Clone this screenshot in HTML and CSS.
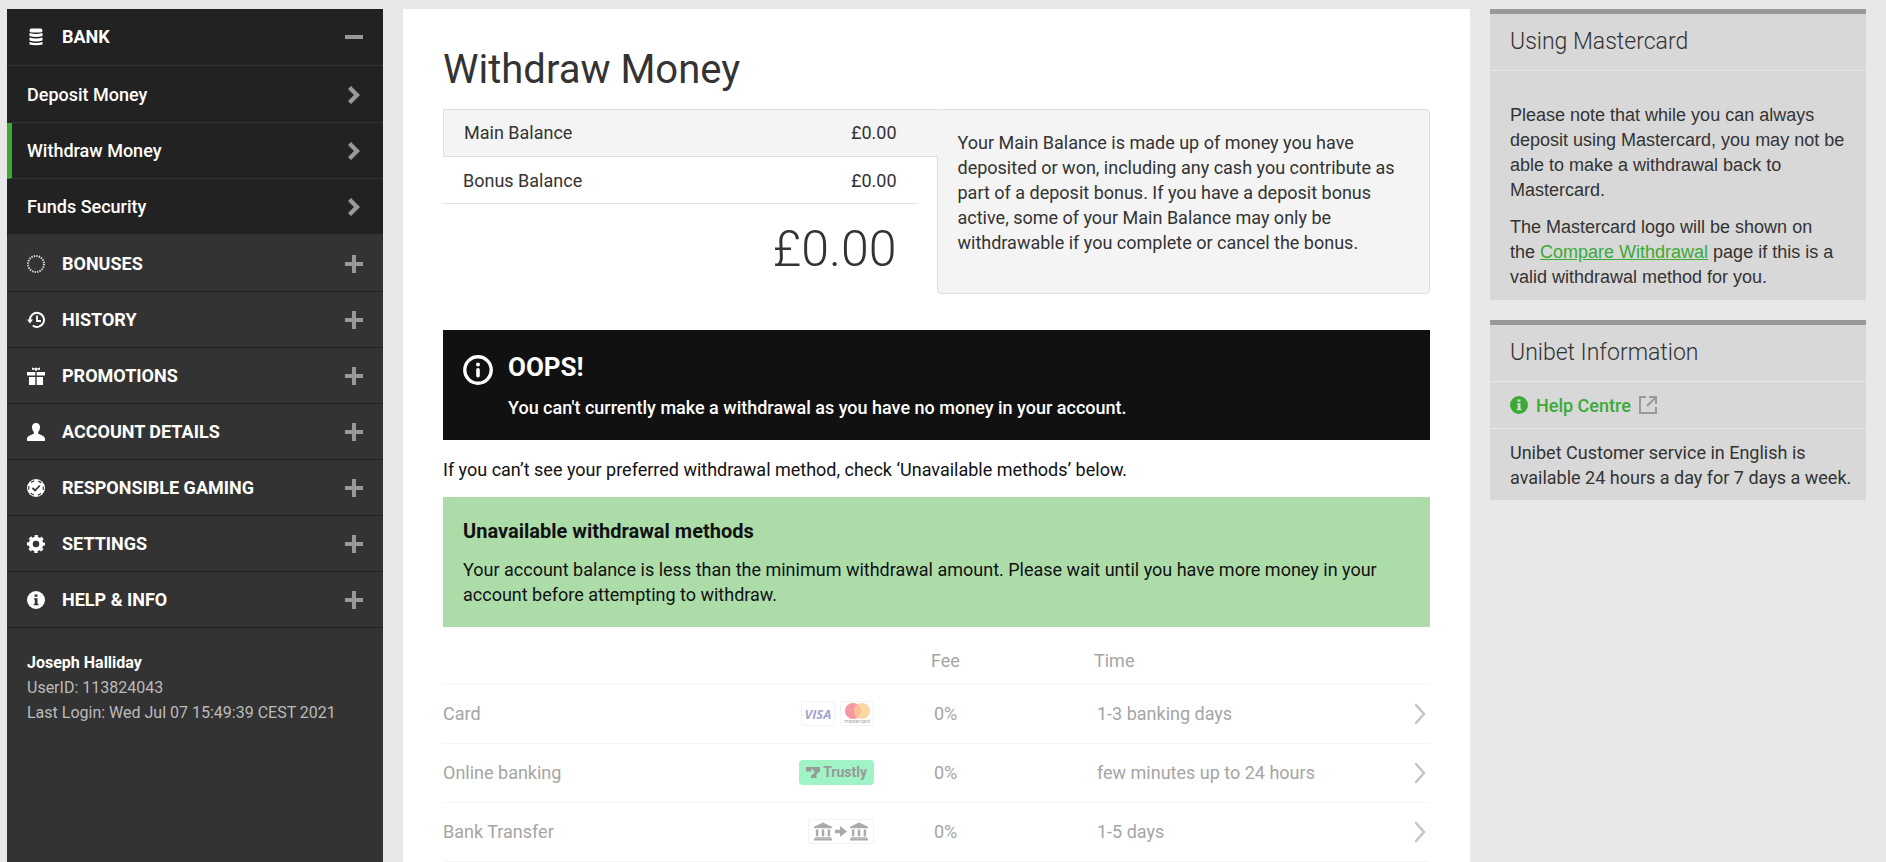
FILE: index.html
```html
<!DOCTYPE html>
<html lang="en">
<head>
  <meta charset="UTF-8" />
  <meta name="viewport" content="width=device-width, initial-scale=1.0"/>
  <title>Withdraw Money</title>
  <link rel="stylesheet" href="styles.css">
</head>
<body>
  <!-- shared icons -->
  <svg class="sprite" aria-hidden="true">
    <symbol id="plus" viewBox="0 0 18 18"><path d="M7 0h4v7h7v4h-7v7H7v-7H0V7h7z"/></symbol>
    <symbol id="minus" viewBox="0 0 18 18"><path d="M0 7h18v4H0z"/></symbol>
    <symbol id="arrow" viewBox="0 0 18 18"><path d="M6 0l9 9-9 9-3-3 6-6-6-6z"/></symbol>
    <symbol id="chevron" viewBox="0 0 12 22"><path d="M2 2L10 11l-8 9" fill="none" stroke="currentColor" stroke-width="2.500" stroke-linecap="round"/></symbol>
    <symbol id="info" viewBox="0 0 18 18"><path fill-rule="evenodd" d="M9 0a9 9 0 1 0 0 18A9 9 0 0 0 9 0zM7.500 3.500h3v2.300h-3zM7 7.200h3.500v5.500h1v1.500H6.800v-1.500h1V8.600H7z"/></symbol>
    <symbol id="building" viewBox="0 0 19 19"><path d="M9.500 0L19 4.500V6H0V4.500zM2 7.500h2.600v7H2zM8.200 7.500h2.600v7H8.200zM14.400 7.500H17v7h-2.600zM1 15.500h17v1H1zM0 17h19v2H0z"/></symbol>
  </svg>

  <div class="page">
    <aside class="sidebar">
      <nav>
        <button class="menuHead open">
          <svg class="icon" viewBox="0 0 18 18"><rect x="2.500" y="0.500" width="13" height="4" rx="2"/><path d="M2.500 5q6.500 2 13 0v3q-6.500 2-13 0zM2.500 9.500q6.500 2 13 0v3q-6.500 2-13 0zM2.500 14q6.500 2 13 0v2.500q-6.500 1.500-13 0z"/></svg>
          <span>Bank</span>
          <svg class="toggle"><use href="#minus"/></svg>
        </button>
        <div class="subMenu">
          <a href="#deposit">Deposit Money <svg class="toggle"><use href="#arrow"/></svg></a>
          <a href="#withdraw" class="active">Withdraw Money <svg class="toggle"><use href="#arrow"/></svg></a>
          <a href="#security">Funds Security <svg class="toggle"><use href="#arrow"/></svg></a>
        </div>
        <button class="menuHead">
          <svg class="icon" viewBox="0 0 18 18"><circle cx="9" cy="9" r="8" fill="none" stroke="#ddd" stroke-width="2" stroke-dasharray="1.400 1.113"/></svg>
          <span>Bonuses</span>
          <svg class="toggle"><use href="#plus"/></svg>
        </button>
        <button class="menuHead">
          <svg class="icon" viewBox="0 0 18 18"><path d="M3 9.500a7 7 0 1 1 2.800 5" fill="none" stroke="#fff" stroke-width="2"/><path d="M0 8.500h6L3 12.500z"/><path d="M10 4.500V10h4" fill="none" stroke="#fff" stroke-width="1.800"/></svg>
          <span>History</span>
          <svg class="toggle"><use href="#plus"/></svg>
        </button>
        <button class="menuHead">
          <svg class="icon" viewBox="0 0 18 18"><path d="M0 5h8.300v3.500H0zM9.700 5H18v3.500H9.700zM2 10h6.300v8H2zM9.700 10H16v8H9.700zM5 .5l3 1 .7-1h.6l.7 1 3-1v2.500l-3-.5-.5 1.500h-1L8 2.500 5 3z"/></svg>
          <span>Promotions</span>
          <svg class="toggle"><use href="#plus"/></svg>
        </button>
        <button class="menuHead">
          <svg class="icon" viewBox="0 0 18 18"><path d="M9 0c2.700 0 4 1.800 4 4.200 0 2-.8 3.500-1.800 4.800v1.700c3.300 1.300 6.800 2.300 6.800 5.300v2H0v-2c0-3 3.500-4 6.800-5.300V9C5.800 7.700 5 6.200 5 4.200 5 1.800 6.300 0 9 0z"/></svg>
          <span>Account details</span>
          <svg class="toggle"><use href="#plus"/></svg>
        </button>
        <button class="menuHead">
          <svg class="icon" viewBox="0 0 18 18"><circle cx="9" cy="9" r="9"/><circle cx="9" cy="9" r="7.300" fill="none" stroke="#333" stroke-width="1.200" stroke-dasharray="3.500 4.145" stroke-dashoffset="1.700"/><path d="M5.500 9l2.600 2.500L12.800 6.500" fill="none" stroke="#333" stroke-width="1.800"/></svg>
          <span>Responsible gaming</span>
          <svg class="toggle"><use href="#plus"/></svg>
        </button>
        <button class="menuHead">
          <svg class="icon" viewBox="0 0 18 18"><circle cx="9" cy="9" r="5.300" fill="none" stroke="#fff" stroke-width="4"/><circle cx="9" cy="9" r="8" fill="none" stroke="#fff" stroke-width="2" stroke-dasharray="3.400 2.883" stroke-dashoffset="1.700"/></svg>
          <span>Settings</span>
          <svg class="toggle"><use href="#plus"/></svg>
        </button>
        <button class="menuHead">
          <svg class="icon"><use href="#info"/></svg>
          <span>Help &amp; info</span>
          <svg class="toggle"><use href="#plus"/></svg>
        </button>
      </nav>
      <div class="user">
        <strong>Joseph Halliday</strong>
        <span>UserID: 113824043</span>
        <span>Last Login: Wed Jul 07 15:49:39 CEST 2021</span>
      </div>
    </aside>

    <main class="content">
      <h1>Withdraw Money</h1>

      <section class="balance">
        <div class="amounts">
          <div class="amountRow selected"><span>Main Balance</span><span>£0.00</span></div>
          <div class="amountRow"><span>Bonus Balance</span><span>£0.00</span></div>
          <div class="total">£0.00</div>
        </div>
        <p class="balanceInfo">Your Main Balance is made up of money you have deposited or won, including any cash you contribute as part of a deposit bonus. If you have a deposit bonus active, some of your Main Balance may only be withdrawable if you complete or cancel the bonus.</p>
      </section>

      <section class="alert">
        <svg class="alertIcon" viewBox="0 0 30 30"><circle cx="15" cy="15" r="13.200" fill="none" stroke="#fff" stroke-width="3.400"/><circle cx="15" cy="9.500" r="2"/><rect x="13.200" y="13" width="3.600" height="9.500" rx="1.800"/></svg>
        <div>
          <h2>OOPS!</h2>
          <p>You can't currently make a withdrawal as you have no money in your account.</p>
        </div>
      </section>

      <p class="hint">If you can’t see your preferred withdrawal method, check ‘Unavailable methods’ below.</p>

      <section class="notice">
        <h3>Unavailable withdrawal methods</h3>
        <p>Your account balance is less than the minimum withdrawal amount. Please wait until you have more money in your account before attempting to withdraw.</p>
      </section>

      <table class="methods">
        <thead>
          <tr><th class="name"></th><th class="logos"></th><th class="fee">Fee</th><th class="time">Time</th><th class="more"></th></tr>
        </thead>
        <tbody>
          <tr>
            <td class="name">Card</td>
            <td class="logos">
              <div class="logoRow">
                <span class="card visa">VISA</span>
                <span class="card master">
                  <svg viewBox="0 0 25 16"><circle cx="8" cy="8" r="8" fill="#eb001b"/><circle cx="17" cy="8" r="8" fill="#f79e1b"/><path d="M12.500 1.400a8 8 0 0 1 0 13.200 8 8 0 0 1 0-13.200z" fill="#ff5f00"/></svg>
                  <small>mastercard</small>
                </span>
              </div>
            </td>
            <td class="fee">0%</td>
            <td class="time">1-3 banking days</td>
            <td class="more"><svg><use href="#chevron"/></svg></td>
          </tr>
          <tr>
            <td class="name">Online banking</td>
            <td class="logos">
              <div class="logoRow">
                <span class="trustly"><svg viewBox="0 0 14 11"><path d="M0 0h14v4.500L10.500 7v4H5V8.500L8.500 6V4.500L6 1.500 5 4.500H0z"/></svg>Trustly</span>
              </div>
            </td>
            <td class="fee">0%</td>
            <td class="time">few minutes up to 24 hours</td>
            <td class="more"><svg><use href="#chevron"/></svg></td>
          </tr>
          <tr>
            <td class="name">Bank Transfer</td>
            <td class="logos">
              <div class="logoRow">
                <span class="card transfer">
                  <svg class="house"><use href="#building"/></svg>
                  <svg class="to" viewBox="0 0 12 11"><path d="M0 3.800h5V0l7 5.500L5 11V7.200H0z"/></svg>
                  <svg class="house"><use href="#building"/></svg>
                </span>
              </div>
            </td>
            <td class="fee">0%</td>
            <td class="time">1-5 days</td>
            <td class="more"><svg><use href="#chevron"/></svg></td>
          </tr>
        </tbody>
      </table>
    </main>

    <aside class="side">
      <section class="panel">
        <h2>Using Mastercard</h2>
        <div class="panelText arial">
          <p>Please note that while you can always deposit using Mastercard, you may not be able to make a withdrawal back to Mastercard.</p>
          <p>The Mastercard logo will be shown on the&nbsp;<a href="#compare">Compare Withdrawal</a> page if this is a valid withdrawal method for you.</p>
        </div>
      </section>
      <section class="panel">
        <h2>Unibet Information</h2>
        <a class="help" href="#help">
          <svg><use href="#info"/></svg>
          Help Centre
          <svg class="external" viewBox="0 0 18 18"><path d="M7 1H1v16h16v-6M8 10l8-8M10 1h7v7" fill="none" stroke="#999" stroke-width="2"/></svg>
        </a>
        <div class="panelText">
          <p>Unibet Customer service in English is available 24 hours a day for 7 days a week.</p>
        </div>
      </section>
    </aside>
  </div>
</body>
</html>
```
FILE: styles.css
```css
* {
  box-sizing: border-box;
}

body {
  font-family: Roboto, 'Liberation Sans', sans-serif;
  font-size: 18px;
  line-height: 25px;
  color: #333;
  background-color: #e8e8e8;
  margin: 0;
}

h1, h2, h3, p {
  margin: 0;
}

.sprite {
  display: none;
}

.page {
  display: grid;
  grid-template-columns: 376px 1fr 376px;
  gap: 20px;
  min-height: 100vh;
  padding: 9px 20px 0 7px;
}

/* left menu */
.sidebar {
  background-color: #333;
  color: #fff;
}

.menuHead {
  display: flex;
  align-items: center;
  width: 100%;
  height: 56px;
  padding: 0 20px;
  border: none;
  border-bottom: 1px solid #222;
  background: none;
  color: #fff;
  font: bold 18px Roboto, sans-serif;
  text-align: left;
  text-transform: uppercase;
  cursor: pointer;
}

.menuHead.open {
  background-color: #222;
}

.menuHead span {
  flex: 1;
  padding-left: 17px;
}

.icon, .toggle {
  width: 18px;
  height: 18px;
  fill: #fff;
}

.toggle {
  fill: #999;
}

.subMenu {
  padding-top: 1px;
  background-color: #222;
  border-top: 1px solid #333;
  border-bottom: 1px solid #333;
}

.subMenu a {
  display: flex;
  align-items: center;
  justify-content: space-between;
  height: 56px;
  padding: 0 20px 0 15px;
  border-left: 5px solid transparent;
  border-bottom: 1px solid #333;
  color: #fff;
  font-weight: 500;
  text-decoration: none;
}

.subMenu a.active {
  border-left-color: #3aaa35;
}

.user {
  display: flex;
  flex-direction: column;
  padding: 22px 20px;
  font-size: 16px;
  color: #bbb;
}

.user strong {
  color: #fff;
  font-weight: bold;
}

/* main column */
.content {
  background-color: #fff;
  padding: 37px 40px 0;
}

h1 {
  font-size: 40px;
  font-weight: 400;
  line-height: 48px;
  margin-bottom: 15px;
}

.balance {
  display: grid;
  grid-template-columns: 1fr 1fr;
}

.amountRow {
  display: flex;
  justify-content: space-between;
  margin-right: 20px;
  padding: 11px 20px 10px;
  border-bottom: 1px solid #e5e5e5;
}

.amountRow.selected {
  position: relative;
  margin-right: -1px;
  padding: 10px 41px 11px 20px;
  background-color: #f4f4f4;
  border: 1px solid #ddd;
  border-right: none;
}

.total {
  padding: 15px 40px 0 0;
  font-size: 50px;
  font-weight: 300;
  line-height: 60px;
  text-align: right;
}

.balanceInfo {
  padding: 20px 30px 38px 20px;
  background-color: #f4f4f4;
  border: 1px solid #ddd;
  border-radius: 4px;
}

.alert {
  display: flex;
  gap: 15px;
  margin-top: 36px;
  padding: 25px 20px 20px;
  background-color: #111;
  color: #fff;
  font-weight: 500;
}

.alertIcon {
  width: 30px;
  height: 30px;
  fill: #fff;
}

.alert h2 {
  font-size: 26px;
  font-weight: bold;
  margin-bottom: 15px;
}

.hint {
  margin: 17px 0 15px;
  color: #111;
}

.notice {
  padding: 22px 20px 20px;
  background-color: #acdda9;
  color: #111;
}

.notice h3 {
  font-size: 20px;
  font-weight: bold;
  margin-bottom: 13px;
}

.methods {
  width: 100%;
  margin-top: 11px;
  border-collapse: collapse;
  table-layout: fixed;
  color: #a5a5a5;
}

.methods th, .methods td {
  height: 59px;
  padding: 0;
  border-bottom: 1px solid #f5f5f5;
  font-weight: 400;
  text-align: left;
}

.methods th {
  height: 46px;
}

.methods .logos {
  width: 100px;
}

.methods .fee {
  width: 220px;
  padding-left: 57px;
}

.methods .time {
  width: 320px;
}

.methods td.fee {
  padding-left: 60px;
}

.methods td.time {
  padding-left: 3px;
}

.methods .more {
  width: 16px;
}

.methods .more svg {
  display: block;
  width: 12px;
  height: 22px;
  color: #c5c5c5;
}

.logoRow {
  display: flex;
  justify-content: flex-end;
  gap: 5px;
}

.logoRow svg {
  fill: #aaa;
}

.card {
  display: flex;
  align-items: center;
  justify-content: center;
  width: 34px;
  height: 25px;
  border: 1px solid #f3f3f3;
  border-radius: 3px;
}

.visa {
  color: #a3a5d0;
  font: italic bold 13px 'Open Sans', sans-serif;
}

.master {
  flex-direction: column;
}

.master svg {
  width: 25px;
  height: 16px;
  opacity: 0.4;
}

.master small {
  font-size: 5px;
  line-height: 5px;
}

.trustly {
  display: flex;
  align-items: center;
  gap: 3px;
  height: 25px;
  padding: 0 7px;
  border-radius: 4px;
  background-color: #9ff3c5;
  color: #999;
  font-size: 14px;
  font-weight: bold;
}

.trustly svg {
  width: 14px;
  height: 11px;
  fill: #999;
}

.transfer {
  width: 66px;
  gap: 3px;
}

.house {
  width: 18px;
  height: 19px;
}

.to {
  width: 12px;
  height: 11px;
}

/* right column */
.panel {
  margin-bottom: 20px;
  border-top: 5px solid #999;
  background-color: #d8d8d8;
}

.panel h2 {
  padding: 15px 20px 16px;
  border-bottom: 1px solid #e8e8e8;
  font-size: 23px;
  font-weight: 300;
}

.panelText {
  padding: 11px 10px 10px 20px;
}

.panelText.arial {
  padding-top: 32px;
  font-family: 'Liberation Sans', Arial, sans-serif;
}

.panelText p + p {
  margin-top: 12px;
}

.panelText a {
  color: #3aaa35;
}

.help {
  display: flex;
  align-items: center;
  gap: 8px;
  height: 47px;
  padding: 0 20px;
  border-bottom: 1px solid #e8e8e8;
  color: #3aaa35;
  font-weight: 500;
  text-decoration: none;
}

.help svg {
  width: 18px;
  height: 18px;
  fill: #3aaa35;
}
```
